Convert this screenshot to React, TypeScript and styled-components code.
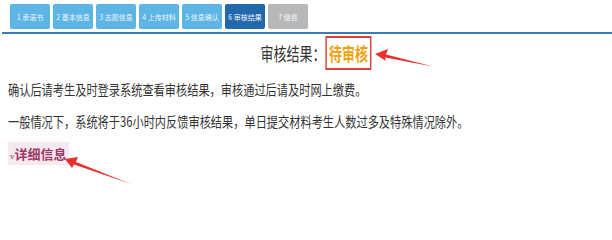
import React from 'react'
import styled, { createGlobalStyle } from 'styled-components'

const GlobalStyle = createGlobalStyle`
  body {
    margin: 0;
    background: #ffffff;
    font-family: "Noto Sans CJK SC", "Noto Sans", sans-serif;
  }
`

const steps = ['1 承诺书', '2 基本信息', '3 志愿信息', '4 上传材料', '5 信息确认', '6 审核结果', '7 缴费']

const App = () => {
  return (
    <Page>
      <GlobalStyle />
      <TabBar>
        {steps.map((s, i) => (
          <Tab key={s} kind={i === 5 ? 'active' : i === 6 ? 'off' : 'done'}>
            {s}
          </Tab>
        ))}
      </TabBar>
      <Divider />

      <TitleRow>
        <Title>
          审核结果：<Status>待审核</Status>
        </Title>
      </TitleRow>

      <Paragraph>确认后请考生及时登录系统查看审核结果，审核通过后请及时网上缴费。</Paragraph>
      <Paragraph>一般情况下，系统将于36小时内反馈审核结果，单日提交材料考生人数过多及特殊情况除外。</Paragraph>

      <DetailRow>
        <Detail><small>v</small>详细信息</Detail>
      </DetailRow>

      {/* red annotation arrows drawn over the page */}
      <Overlay width="612" height="240" viewBox="0 0 612 240">
        <polygon points="375,54 388,49 386,54.5 433,66.5 385,57.5 386,61" fill="#e8302c" />
        <polygon points="65,159 78,157 76,162 131,184 74,164.5 72,168" fill="#e8302c" />
      </Overlay>
    </Page>
  )
}

export default App

const Page = styled.div`
  position: relative;
  width: 612px;
  height: 240px;
  padding-top: 4px;
  box-sizing: border-box;
  overflow: hidden;
`

const TabBar = styled.div`
  display: flex;
  gap: 3px;
  padding-left: 10px;
`

const Tab = styled.div<{ kind: 'done' | 'active' | 'off' }>`
  width: 40px;
  height: 25px;
  border-radius: 2px;
  display: flex;
  align-items: center;
  justify-content: center;
  color: #eef6fb;
  font-size: 7px;
  white-space: nowrap;
  background-color: ${({ kind }) =>
    kind === 'active' ? '#2368ab' : kind === 'off' ? '#b8b8b8' : '#5cb5e4'};
`

const Divider = styled.div`
  margin: 3px 0 0 2px;
  height: 2px;
  background-color: #3b7bb6;
`

const TitleRow = styled.div`
  display: flex;
  justify-content: center;
  padding-left: 20px;
  margin-top: 2px;
`

const Title = styled.div`
  display: flex;
  align-items: center;
  font-size: 18px;
  color: #333333;
  transform: scaleX(0.72);
`

const Status = styled.span`
  display: inline-block;
  padding: 3px 3px;
  border: 2px solid #e0403a;
  color: #f0a20a;
  font-weight: bold;
  line-height: 24px;
`

const Paragraph = styled.p`
  margin: 6px 0 0 8px;
  font-size: 14px;
  line-height: 26px;
  color: #333333;
  white-space: nowrap;
  transform: scaleX(0.8);
  transform-origin: left center;
`

const DetailRow = styled.div`
  margin: 6px 0 0 8px;
`

const Detail = styled.span`
  display: inline-block;
  padding: 2px 2px;
  background-color: #f6e9f0;
  color: #9c3a68;
  font-size: 13px;
  font-weight: bold;
  font-family: "Liberation Serif", "Noto Sans CJK SC", serif;

  small {
    font-size: 9px;
    font-weight: normal;
  }
`

const Overlay = styled.svg`
  position: absolute;
  left: 0;
  top: 0;
  pointer-events: none;
`
